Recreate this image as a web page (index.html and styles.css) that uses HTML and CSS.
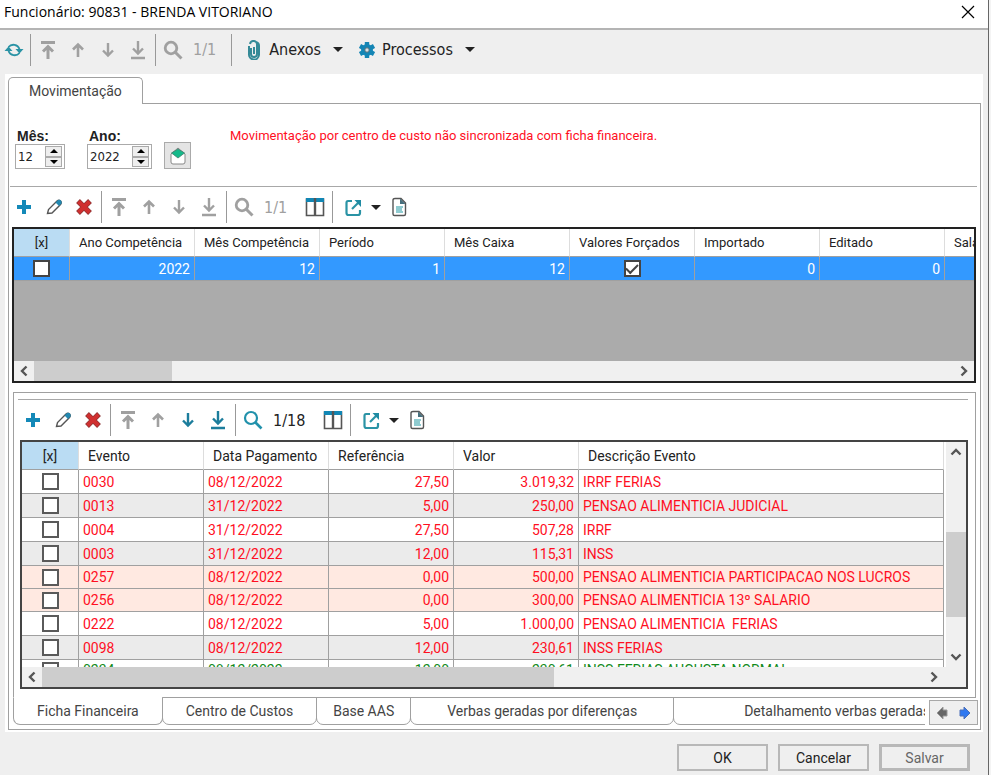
FILE: index.html
```
<!DOCTYPE html>
<html lang="pt-BR">
<head>
    <meta charset="UTF-8">
    <meta name="viewport" content="width=device-width, initial-scale=1.0">
    <title>Funcionário: 90831 - BRENDA VITORIANO</title>
    <link rel="stylesheet" href="styles.css">
</head>
<body>
    <!-- shared icons -->
    <svg class="sprite" aria-hidden="true">
        <symbol id="i-refresh" viewBox="0 0 20 20">
            <path d="M4.500 7A6.500 6.500 0 0 1 15.500 9M15.500 13A6.500 6.500 0 0 1 4.500 11" fill="none" stroke="#2a93a5" stroke-width="1.800"/>
            <path d="M11.500 9h8l-4 4.500zM.5 11h8l-4-4.500z" fill="#2a93a5"/>
        </symbol>
        <symbol id="i-top" viewBox="0 0 20 20">
            <path d="M3 2.500h14M10 19V7M5 11.500l5-5 5 5" fill="none" stroke="currentColor" stroke-width="3"/>
        </symbol>
        <symbol id="i-up" viewBox="0 0 20 20">
            <path d="M10 17V5M5 9.500l5-5 5 5" fill="none" stroke="currentColor" stroke-width="2.600"/>
        </symbol>
        <symbol id="i-down" viewBox="0 0 20 20">
            <path d="M10 3v12M5 10.500l5 5 5-5" fill="none" stroke="currentColor" stroke-width="2.400"/>
        </symbol>
        <symbol id="i-bottom" viewBox="0 0 20 20">
            <path d="M10 1v12M5 8.500l5 5 5-5M3 18h14" fill="none" stroke="currentColor" stroke-width="2.400"/>
        </symbol>
        <symbol id="i-search" viewBox="0 0 20 20">
            <circle cx="8" cy="8" r="5.800" fill="none" stroke="currentColor" stroke-width="2.800"/>
            <path d="M12 12l6.500 6.500" stroke="currentColor" stroke-width="3"/>
        </symbol>
        <symbol id="i-find" viewBox="0 0 20 20">
            <circle cx="8" cy="8" r="6" fill="none" stroke="#2191ab" stroke-width="2.200"/>
            <path d="M12.500 12.500l6 6" stroke="#2191ab" stroke-width="2.600"/>
        </symbol>
        <symbol id="i-clip" viewBox="0 0 16 20">
            <path d="M5 8v6a3 3 0 0 0 6 0V5a3 3 0 0 0-7-1M3 6v8a5 5 0 0 0 10 1V6a4 4 0 0 0-3-4M8 7v7" fill="none" stroke="#358a97" stroke-width="2"/>
        </symbol>
        <symbol id="i-gear" viewBox="0 0 16 16">
            <circle cx="8" cy="8" r="6" fill="#1590c4"/>
            <path d="M8 0v16M1 4l14 8M15 4L1 12" stroke="#1585b4" stroke-width="4.400"/>
            <circle cx="8" cy="8" r="2.200" fill="#d7e3e8" stroke="#5d6f78"/>
        </symbol>
        <symbol id="i-plus" viewBox="0 0 20 20">
            <path d="M10 3v14M3 10h14" stroke="#1489b8" stroke-width="4"/>
        </symbol>
        <symbol id="i-pencil" viewBox="0 0 20 20">
            <path d="M3.500 16.500l1-4L13 4q2-1.500 3.500 0t0 3.500L8 16z" fill="#fff" stroke="#555" stroke-width="1.400"/>
            <path d="M11.500 5.500L14 3q2-.5 3 .5t.5 3L15 9z" fill="#2388b0"/>
        </symbol>
        <symbol id="i-delete" viewBox="0 0 20 20">
            <path d="M4 4l12 12M16 4L4 16" stroke="#8d3434" stroke-width="5.400"/>
            <path d="M4.500 4.500l11 11M15.500 4.500l-11 11" stroke="#d03030" stroke-width="4"/>
        </symbol>
        <symbol id="i-columns" viewBox="0 0 20 20">
            <path d="M1.500 2h17v16.500h-17z" fill="#fff" stroke="#555" stroke-width="1.600"/>
            <path d="M1 1h18v4H1z" fill="#1186b4"/>
            <path d="M10 1v17" stroke="#555" stroke-width="2.400"/>
        </symbol>
        <symbol id="i-export" viewBox="0 0 20 20">
            <path d="M8 4H4Q2.500 4 2.500 6v10q0 2 2 2H14q2 0 2-2v-3" fill="none" stroke="#2a93a5" stroke-width="2.200"/>
            <path d="M8 12l7-7" stroke="#2a93a5" stroke-width="2.200"/>
            <path d="M10.500 3H17v7z" fill="#1f8ba3"/>
        </symbol>
        <symbol id="i-doc" viewBox="0 0 20 20">
            <path d="M4 3q0-1.500 2-1.500h6L16.500 6v11q0 1.500-1.500 1.500H5.500Q4 18.500 4 17z" fill="#fff" stroke="#555" stroke-width="1.400"/>
            <path d="M11 1.500L16.500 7H11z" fill="#466f7d"/>
            <path d="M7 9h7v2h-1v3h1v2H7z" fill="#8fcbd0"/>
        </symbol>
        <symbol id="i-envelope" viewBox="0 0 18 18">
            <path d="M2 7l7-6 7 6v8q0 2-2 2H4q-2 0-2-2z" fill="#fff" stroke="#888"/>
            <path d="M2.500 6L9 2l6.500 4L9 11z" fill="#14b98a" stroke="#3f7d6c" stroke-width=".8"/>
        </symbol>
        <symbol id="i-left" viewBox="0 0 12 12">
            <path d="M8.500 1.500L4 6l4.500 4.500" fill="none" stroke="#555" stroke-width="2.400"/>
        </symbol>
    </svg>

    <div class="window">
        <header class="titlebar">
            <h1>Funcionário: 90831 - BRENDA VITORIANO</h1>
            <button class="close" aria-label="Fechar">
                <svg width="14" height="14" viewBox="0 0 14 14"><path d="M1 1l12 12M13 1L1 13" stroke="#000" stroke-width="1.200"/></svg>
            </button>
        </header>

        <div class="toolbar main-toolbar">
            <button class="icon-btn refresh" aria-label="Atualizar"><svg><use href="#i-refresh"/></svg></button>
            <span class="sep"></span>
            <button class="icon-btn off" aria-label="Primeiro"><svg><use href="#i-top"/></svg></button>
            <button class="icon-btn off" aria-label="Anterior"><svg><use href="#i-up"/></svg></button>
            <button class="icon-btn off" aria-label="Próximo"><svg><use href="#i-down"/></svg></button>
            <button class="icon-btn off" aria-label="Último"><svg><use href="#i-bottom"/></svg></button>
            <span class="sep"></span>
            <button class="icon-btn off" aria-label="Buscar"><svg><use href="#i-search"/></svg></button>
            <span class="count off">1/1</span>
            <span class="sep"></span>
            <button class="menu-btn"><svg class="clip"><use href="#i-clip"/></svg>Anexos<i class="caret"></i></button>
            <button class="menu-btn"><svg class="gear"><use href="#i-gear"/></svg>Processos<i class="caret"></i></button>
        </div>

        <main class="panel">
            <button class="top-tab">Movimentação</button>
            <div class="content">
                <div class="fields">
                    <div class="field">
                        <label for="mes">Mês:</label>
                        <div class="spinner month">
                            <input id="mes" type="text" value="12">
                            <div class="steps">
                                <button aria-label="Mais"><i class="tri-up"></i></button>
                                <button aria-label="Menos"><i class="tri-down"></i></button>
                            </div>
                        </div>
                    </div>
                    <div class="field">
                        <label for="ano">Ano:</label>
                        <div class="spinner year">
                            <input id="ano" type="text" value="2022">
                            <div class="steps">
                                <button aria-label="Mais"><i class="tri-up"></i></button>
                                <button aria-label="Menos"><i class="tri-down"></i></button>
                            </div>
                        </div>
                    </div>
                    <button class="open-btn" aria-label="Abrir"><svg><use href="#i-envelope"/></svg></button>
                    <p class="warning">Movimentação por centro de custo não sincronizada com ficha financeira.</p>
                </div>

                <div class="toolbar">
                    <button class="icon-btn" aria-label="Adicionar"><svg><use href="#i-plus"/></svg></button>
                    <button class="icon-btn" aria-label="Editar"><svg><use href="#i-pencil"/></svg></button>
                    <button class="icon-btn" aria-label="Excluir"><svg><use href="#i-delete"/></svg></button>
                    <span class="sep"></span>
                    <button class="icon-btn off" aria-label="Primeiro"><svg><use href="#i-top"/></svg></button>
                    <button class="icon-btn off" aria-label="Anterior"><svg><use href="#i-up"/></svg></button>
                    <button class="icon-btn off" aria-label="Próximo"><svg><use href="#i-down"/></svg></button>
                    <button class="icon-btn off" aria-label="Último"><svg><use href="#i-bottom"/></svg></button>
                    <span class="sep"></span>
                    <button class="icon-btn off" aria-label="Buscar"><svg><use href="#i-search"/></svg></button>
                    <span class="count off">1/1</span>
                    <button class="icon-btn" aria-label="Colunas"><svg><use href="#i-columns"/></svg></button>
                    <span class="sep"></span>
                    <button class="export-btn" aria-label="Exportar"><svg><use href="#i-export"/></svg><i class="caret"></i></button>
                    <button class="icon-btn" aria-label="Relatório"><svg><use href="#i-doc"/></svg></button>
                </div>

                <div class="grid months">
                    <div class="grid-view">
                        <table>
                            <colgroup><col class="c-check"><col><col><col><col><col><col><col><col></colgroup>
                            <thead>
                                <tr>
                                    <th class="check">[x]</th><th>Ano Competência</th><th>Mês Competência</th><th>Período</th><th>Mês Caixa</th><th>Valores Forçados</th><th>Importado</th><th>Editado</th><th>Salário</th>
                                </tr>
                            </thead>
                            <tbody>
                                <tr class="selected">
                                    <td class="check"><input type="checkbox" aria-label="Selecionar"></td><td class="num">2022</td><td class="num">12</td><td class="num">1</td><td class="num">12</td><td class="check"><input type="checkbox" aria-label="Valores Forçados" checked></td><td class="num">0</td><td class="num">0</td><td></td>
                                </tr>
                            </tbody>
                        </table>
                    </div>
                    <div class="hscroll">
                        <button aria-label="Esquerda"><svg><use href="#i-left"/></svg></button>
                        <div class="track"><div class="thumb short"></div></div>
                        <button class="flip" aria-label="Direita"><svg><use href="#i-left"/></svg></button>
                    </div>
                </div>

                <section class="details">
                    <div class="toolbar">
                        <button class="icon-btn" aria-label="Adicionar"><svg><use href="#i-plus"/></svg></button>
                        <button class="icon-btn" aria-label="Editar"><svg><use href="#i-pencil"/></svg></button>
                        <button class="icon-btn" aria-label="Excluir"><svg><use href="#i-delete"/></svg></button>
                        <span class="sep"></span>
                        <button class="icon-btn off" aria-label="Primeiro"><svg><use href="#i-top"/></svg></button>
                        <button class="icon-btn off" aria-label="Anterior"><svg><use href="#i-up"/></svg></button>
                        <button class="icon-btn" aria-label="Próximo"><svg><use href="#i-down"/></svg></button>
                        <button class="icon-btn" aria-label="Último"><svg><use href="#i-bottom"/></svg></button>
                        <span class="sep"></span>
                        <button class="icon-btn" aria-label="Buscar"><svg><use href="#i-find"/></svg></button>
                        <span class="count">1/18</span>
                        <button class="icon-btn" aria-label="Colunas"><svg><use href="#i-columns"/></svg></button>
                        <span class="sep"></span>
                        <button class="export-btn" aria-label="Exportar"><svg><use href="#i-export"/></svg><i class="caret"></i></button>
                        <button class="icon-btn" aria-label="Relatório"><svg><use href="#i-doc"/></svg></button>
                    </div>

                    <div class="grid events">
                        <div class="grid-row">
                            <div class="grid-view">
                                <table>
                                    <colgroup><col class="c-check"><col><col><col><col><col class="c-desc"></colgroup>
                                    <thead>
                                        <tr><th class="check">[x]</th><th>Evento</th><th>Data Pagamento</th><th>Referência</th><th>Valor</th><th>Descrição Evento</th></tr>
                                    </thead>
                                    <tbody>
                                        <tr><td class="check"><input type="checkbox" aria-label="0030"></td><td>0030</td><td>08/12/2022</td><td class="num">27,50</td><td class="num">3.019,32</td><td>IRRF FERIAS</td></tr>
                                        <tr class="alt"><td class="check"><input type="checkbox" aria-label="0013"></td><td>0013</td><td>31/12/2022</td><td class="num">5,00</td><td class="num">250,00</td><td>PENSAO ALIMENTICIA JUDICIAL</td></tr>
                                        <tr><td class="check"><input type="checkbox" aria-label="0004"></td><td>0004</td><td>31/12/2022</td><td class="num">27,50</td><td class="num">507,28</td><td>IRRF</td></tr>
                                        <tr class="alt"><td class="check"><input type="checkbox" aria-label="0003"></td><td>0003</td><td>31/12/2022</td><td class="num">12,00</td><td class="num">115,31</td><td>INSS</td></tr>
                                        <tr class="pink"><td class="check"><input type="checkbox" aria-label="0257"></td><td>0257</td><td>08/12/2022</td><td class="num">0,00</td><td class="num">500,00</td><td>PENSAO ALIMENTICIA PARTICIPACAO NOS LUCROS</td></tr>
                                        <tr class="pink"><td class="check"><input type="checkbox" aria-label="0256"></td><td>0256</td><td>08/12/2022</td><td class="num">0,00</td><td class="num">300,00</td><td>PENSAO ALIMENTICIA 13º SALARIO</td></tr>
                                        <tr><td class="check"><input type="checkbox" aria-label="0222"></td><td>0222</td><td>08/12/2022</td><td class="num">5,00</td><td class="num">1.000,00</td><td>PENSAO ALIMENTICIA&nbsp; FERIAS</td></tr>
                                        <tr class="alt"><td class="check"><input type="checkbox" aria-label="0098"></td><td>0098</td><td>08/12/2022</td><td class="num">12,00</td><td class="num">230,61</td><td>INSS FERIAS</td></tr>
                                        <tr class="green"><td class="check"><input type="checkbox" aria-label="0234"></td><td>0234</td><td>08/12/2022</td><td class="num">12,00</td><td class="num">230,61</td><td>INSS FERIAS AUGUSTA NORMAL</td></tr>
                                    </tbody>
                                </table>
                            </div>
                            <div class="vscroll">
                                <button class="turn" aria-label="Acima"><svg><use href="#i-left"/></svg></button>
                                <div class="track"><div class="thumb tall"></div></div>
                                <button class="turn-back" aria-label="Abaixo"><svg><use href="#i-left"/></svg></button>
                            </div>
                        </div>
                        <div class="hscroll">
                            <button aria-label="Esquerda"><svg><use href="#i-left"/></svg></button>
                            <div class="track"><div class="thumb long"></div></div>
                            <button class="flip" aria-label="Direita"><svg><use href="#i-left"/></svg></button>
                        </div>
                    </div>
                </section>

                <nav class="bottom-tabs">
                    <div class="tab-list">
                        <button class="tab active">Ficha Financeira</button>
                        <button class="tab">Centro de Custos</button>
                        <button class="tab narrow">Base AAS</button>
                        <button class="tab wide">Verbas geradas por diferenças</button>
                        <button class="tab wider">Detalhamento verbas geradas</button>
                    </div>
                    <div class="tab-nav">
                        <button aria-label="Abas anteriores"><svg width="12" height="14" viewBox="0 0 12 14"><path d="M1 7l6-6v3h4v6H7v3z" fill="#666" stroke="#999"/></svg></button>
                        <button aria-label="Próximas abas"><svg width="12" height="14" viewBox="0 0 12 14"><path d="M11 7L5 1v3H1v6h4v3z" fill="#2f78f0" stroke="#4a6fb8"/></svg></button>
                    </div>
                </nav>
            </div>
        </main>

        <footer class="actions">
            <button>OK</button>
            <button>Cancelar</button>
            <button class="dim">Salvar</button>
        </footer>
    </div>
</body>
</html>
```
FILE: styles.css
```
* {
    box-sizing: border-box;
}

body {
    margin: 0;
    padding-right: 2px;
    height: 100vh;
    background-color: #f4f4f4;
    font-family: Roboto, sans-serif;
    font-size: 14px;
    color: #222;
}

button {
    font: inherit;
    color: inherit;
    background: none;
    border: none;
    padding: 0;
    margin: 0;
}

svg {
    display: block;
    flex: none;
}

.sprite {
    display: none;
}

.window {
    display: flex;
    flex-direction: column;
    height: 100vh;
    min-height: 600px;
    background-color: #efefef;
    border-right: 1px solid #666;
}

/* title bar */
.titlebar {
    display: flex;
    justify-content: space-between;
    align-items: center;
    height: 30px;
    padding: 0 13px 5px 4px;
    background-color: #fff;
    border-bottom: 2px solid #b4b4b4;
}

h1 {
    margin: 0;
    font-family: "Open Sans", sans-serif;
    font-size: 14px;
    font-weight: normal;
    color: #000;
}

/* toolbars */
.toolbar {
    display: flex;
    align-items: center;
    flex: none;
    height: 40px;
    font-family: "DejaVu Sans Condensed", "DejaVu Sans", sans-serif;
    font-size: 16px;
    color: #1c7d9c;
}

.main-toolbar {
    height: 44px;
    padding-bottom: 5px;
}

.icon-btn {
    display: flex;
    justify-content: center;
    align-items: center;
    width: 30px;
    height: 30px;
}

.icon-btn svg,
.export-btn svg {
    width: 20px;
    height: 20px;
}

.refresh {
    width: 28px;
}

.off {
    color: #a0a0a0;
}

.sep {
    width: 1px;
    height: 32px;
    margin: 0 2px;
    background-color: #999;
}

.count {
    padding: 0 13px 0 5px;
    color: #222;
}

.count.off {
    color: #a0a0a0;
}

.menu-btn {
    display: flex;
    align-items: center;
    padding: 0 4px 0 12px;
    color: #222;
}

.menu-btn svg {
    width: 16px;
    margin-right: 7px;
}

.clip {
    height: 20px;
}

.gear {
    height: 16px;
}

.caret {
    border: 5px solid transparent;
    border-top-color: #222;
    border-bottom: none;
}

.menu-btn .caret {
    margin-left: 12px;
}

.export-btn {
    display: flex;
    align-items: center;
    gap: 7px;
    padding: 0 3px 0 9px;
}

/* main panel */
.panel {
    display: flex;
    flex-direction: column;
    flex: 1;
    min-height: 0;
    margin: 0 5px 0 5px;
    padding: 3px 2px 2px 3px;
    background-color: #fff;
}

.top-tab {
    position: relative;
    align-self: flex-start;
    height: 27px;
    margin-bottom: -1px;
    padding: 0 20px;
    background-color: #fff;
    border: 1px solid #a0a0a0;
    border-bottom: none;
    border-radius: 5px 5px 0 0;
    color: #444;
}

.content {
    display: flex;
    flex-direction: column;
    flex: 1;
    min-height: 0;
    border: 1px solid #a0a0a0;
    padding-bottom: 4px;
}

.fields {
    display: flex;
    align-items: flex-end;
    height: 83px;
    margin: 0 3px 0 1px;
    padding: 0 5px 17px;
    border-bottom: 1px solid #a8a8a8;
}

.field {
    margin-right: 22px;
}

.field label {
    display: block;
    padding-left: 2px;
    font-family: "Liberation Sans", sans-serif;
    font-weight: bold;
    line-height: 16px;
}

.spinner {
    display: flex;
    height: 25px;
    padding: 1px 2px;
    border: 1px solid #aaa;
    background-color: #fff;
}

.month {
    width: 50px;
}

.year {
    width: 65px;
}

.spinner input {
    flex: 1;
    min-width: 0;
    padding: 0;
    border: none;
    outline: none;
    font-family: "DejaVu Sans Condensed", "DejaVu Sans", sans-serif;
    font-size: 13px;
    color: #222;
}

.steps {
    display: flex;
    flex-direction: column;
    width: 17px;
}

.steps button {
    display: flex;
    justify-content: center;
    align-items: center;
    flex: 1;
    background-color: #eee;
    border: 1px solid #aaa;
}

.tri-up,
.tri-down {
    border: 4px solid transparent;
}

.tri-up {
    border-bottom-color: #000;
    border-top: none;
}

.tri-down {
    border-top-color: #000;
    border-bottom: none;
}

.open-btn {
    display: flex;
    justify-content: center;
    align-items: center;
    width: 27px;
    height: 27px;
    margin-left: -10px;
    background-color: #e4e4e4;
    border: 1px solid #aaa;
}

.open-btn svg {
    width: 18px;
    height: 18px;
}

.warning {
    align-self: flex-end;
    margin: 0 0 24px 39px;
    font-size: 13px;
    line-height: 18px;
    color: #ff0f1f;
}

/* data grids */
.grid {
    border: 2px solid #222;
    background-color: #ababab;
}

.months {
    display: flex;
    flex-direction: column;
    flex: none;
    height: 156px;
    margin: 0 4px 0 3px;
}

.grid-view {
    flex: 1;
    min-width: 0;
    min-height: 0;
    overflow: hidden;
}

table {
    table-layout: fixed;
    border-collapse: separate;
    border-spacing: 0;
}

.months table {
    width: 1056px;
}

.events table {
    width: 100%;
}

col {
    width: 125px;
}

.c-check {
    width: 56px;
}

.c-desc {
    width: auto;
}

th {
    height: 28px;
    padding: 0 9px;
    background-color: #fff;
    border-right: 1px solid #ddd;
    border-bottom: 1px solid #a0a0a0;
    font-weight: normal;
    text-align: left;
    white-space: nowrap;
}

.months th {
    font-size: 13px;
}

th.check {
    background-color: #badcf3;
}

td {
    height: 24px;
    padding: 0 4px;
    border-right: 1px solid #a0a0a0;
    border-bottom: 1px solid #a0a0a0;
    line-height: 16px;
    white-space: nowrap;
}

.num {
    text-align: right;
}

.check {
    padding: 0;
    text-align: center;
}

td input {
    appearance: none;
    display: block;
    width: 17px;
    height: 17px;
    margin: 0 auto;
    background-color: #fff;
    border: 2px solid #5a5a5a;
}

.months td input {
    border-color: #444;
}

td input:checked::before {
    content: "";
    display: block;
    width: 10px;
    height: 5px;
    margin: 2px auto 0;
    border: solid #444;
    border-width: 0 0 2px 2px;
    transform: rotate(-45deg);
}

.selected td {
    background-color: #3399ff;
    color: #fff;
}

.hscroll {
    display: flex;
    flex: none;
    height: 20px;
    background-color: #f0f0f0;
}

.hscroll button,
.vscroll button {
    display: flex;
    justify-content: center;
    align-items: center;
    width: 20px;
    height: 20px;
}

.hscroll svg,
.vscroll svg {
    width: 12px;
    height: 12px;
}

.flip svg {
    transform: rotate(180deg);
}

.turn svg {
    transform: rotate(90deg);
}

.turn-back svg {
    transform: rotate(-90deg);
}

.track {
    display: flex;
    flex: 1;
}

.thumb {
    background-color: #cdcdcd;
}

.short {
    width: 15%;
}

.long {
    width: 58%;
}

/* lower area */
.details {
    display: flex;
    flex-direction: column;
    flex: 1;
    min-height: 0;
    margin: 9px 4px 0;
    padding: 6px 7px 8px 4px;
    border: 1px solid #a0a0a0;
}

.details .toolbar {
    height: 41px;
    border-top: 1px solid #a8a8a8;
}

.events {
    display: flex;
    flex-direction: column;
    flex: 1;
    min-height: 0;
    margin-left: 2px;
    border-color: #444;
    background-color: #fff;
}

.events .c-check {
    width: 57px;
}

.grid-row {
    display: flex;
    flex: 1;
    min-height: 0;
}

.events td {
    color: #ff0f1f;
}

.events .alt td {
    background-color: #ebebeb;
}

.events .pink td {
    height: 23px;
    background-color: #ffe9e1;
}

.events .green td {
    padding-top: 2px;
    vertical-align: top;
    color: #128a1c;
}

.vscroll {
    display: flex;
    flex-direction: column;
    width: 20px;
    margin-left: 2px;
    background-color: #f0f0f0;
}

.vscroll .track {
    flex-direction: column;
}

.tall {
    height: 46%;
    margin-top: auto;
    margin-bottom: 30px;
}

.events .hscroll {
    padding-right: 22px;
}

/* tabs below the lower grid */
.bottom-tabs {
    display: flex;
    flex: none;
    margin: -1px 2px 0 4px;
}

.tab-list {
    display: flex;
    flex: 1;
    min-width: 0;
    overflow: hidden;
}

.tab {
    flex: none;
    height: 28px;
    margin-right: -1px;
    padding: 0 23px;
    border: 1px solid #a0a0a0;
    border-radius: 0 0 7px 7px;
    white-space: nowrap;
    color: #444;
}

.tab.active {
    background-color: #fff;
    border-top-color: #fff;
}

.narrow {
    padding: 0 16px;
}

.wide {
    padding: 0 36px;
}

.wider {
    padding: 0 70px;
}

.tab-nav {
    display: flex;
    align-self: flex-end;
    width: 49px;
    height: 25px;
    margin-left: 4px;
    background-color: #efefef;
    border: 1px solid #a8a8a8;
}

.tab-nav button {
    display: flex;
    justify-content: center;
    align-items: center;
    flex: 1;
}

.actions {
    display: flex;
    justify-content: flex-end;
    flex: none;
    gap: 10px;
    height: 43px;
    padding: 12px 18px 4px;
}

.actions button {
    width: 91px;
    background-color: #efefef;
    border: 2px solid #b8b8b8;
}

.actions .dim {
    border-width: 3px;
    color: #666;
}
```
